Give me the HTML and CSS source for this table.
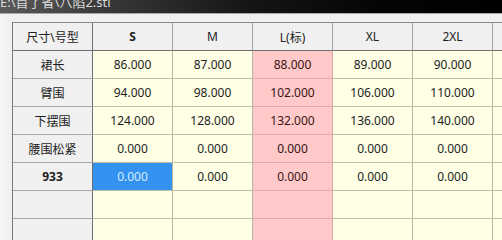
FILE: index.html
```html
<!DOCTYPE html>
<html>
<head>
<meta charset="utf-8">
<link rel="stylesheet" href="styles.css">
</head>
<body>
<div class="titlebar"><span class="title">E:\首了省\八陷2.stl</span></div>
<div class="window">
  <div class="grid">
    <div class="c h corner">尺寸\号型</div>
    <div class="c h b">S</div>
    <div class="c h">M</div>
    <div class="c h">L(标)</div>
    <div class="c h">XL</div>
    <div class="c h">2XL</div>
    <div class="c h"></div>

    <div class="c rh">裙长</div>
    <div class="c d">86.000</div>
    <div class="c d">87.000</div>
    <div class="c d p">88.000</div>
    <div class="c d">89.000</div>
    <div class="c d">90.000</div>
    <div class="c d"></div>

    <div class="c rh">臂围</div>
    <div class="c d">94.000</div>
    <div class="c d">98.000</div>
    <div class="c d p">102.000</div>
    <div class="c d">106.000</div>
    <div class="c d">110.000</div>
    <div class="c d"></div>

    <div class="c rh">下摆围</div>
    <div class="c d">124.000</div>
    <div class="c d">128.000</div>
    <div class="c d p">132.000</div>
    <div class="c d">136.000</div>
    <div class="c d">140.000</div>
    <div class="c d"></div>

    <div class="c rh">腰围松紧</div>
    <div class="c d">0.000</div>
    <div class="c d">0.000</div>
    <div class="c d p">0.000</div>
    <div class="c d">0.000</div>
    <div class="c d">0.000</div>
    <div class="c d"></div>

    <div class="c rh b">933</div>
    <div class="c d sel">0.000</div>
    <div class="c d">0.000</div>
    <div class="c d p">0.000</div>
    <div class="c d">0.000</div>
    <div class="c d">0.000</div>
    <div class="c d"></div>

    <div class="c rh"></div>
    <div class="c d"></div>
    <div class="c d"></div>
    <div class="c d p"></div>
    <div class="c d"></div>
    <div class="c d"></div>
    <div class="c d"></div>

    <div class="c rh"></div>
    <div class="c d"></div>
    <div class="c d"></div>
    <div class="c d p"></div>
    <div class="c d"></div>
    <div class="c d"></div>
    <div class="c d"></div>
  </div>
</div>
</body>
</html>
```
FILE: styles.css
```css
html, body {
  margin: 0;
  padding: 0;
  width: 502px;
  height: 240px;
  overflow: hidden;
  background: #f0f0f0;
  font-family: "Noto Sans", "Noto Sans CJK SC", sans-serif;
  font-size: 12px;
  color: #1e1e1e;
}

.titlebar {
  height: 13px;
  border-bottom: 1px solid #a8a8a8;
  background: linear-gradient(to right, #5a5a5a 0%, #3a3a3a 20%, #151515 50%, #050505 75%, #000 100%);
  overflow: hidden;
}

.title {
  display: block;
  margin-top: -7px;
  line-height: 18px;
  font-size: 13px;
  color: #d8d8d8;
  white-space: nowrap;
}

.window {
  padding: 8px 0 0 12px;
  background: linear-gradient(to right, #f6f6f6 0px, #f0f0f0 12px);
  height: 226px;
  overflow: hidden;
}

.grid {
  display: grid;
  grid-template-columns: repeat(7, 80px);
  grid-auto-rows: 28px;
  width: 560px;
  border-left: 1px solid #7a7a7a;
  border-top: 1px solid #8a8a8a;
}

.c {
  box-sizing: border-box;
  display: flex;
  align-items: center;
  justify-content: center;
  white-space: nowrap;
  border-right: 1px solid #b9b6a2;
  border-bottom: 1px solid #c2bfa8;
}

.h {
  background: #f0f0f0;
  border-right: 1px solid #a0a0a0;
  border-bottom: 1px solid #6e6e6e;
  color: #222;
}

.rh {
  background: #f0f0f0;
  border-right: 1px solid #6e6e6e;
  border-bottom: 1px solid #a8a8a8;
}

.corner {
  border-right: 1px solid #707070;
}

.b {
  font-weight: bold;
}

.d {
  background: #ffffe6;
}

.p {
  background: #ffc9ca;
  color: #3a1414;
  border-bottom-color: #e3aaab;
  border-right-color: #d9a4a4;
}

.sel {
  background: #3392f0;
  color: #d6ecff;
}
```
